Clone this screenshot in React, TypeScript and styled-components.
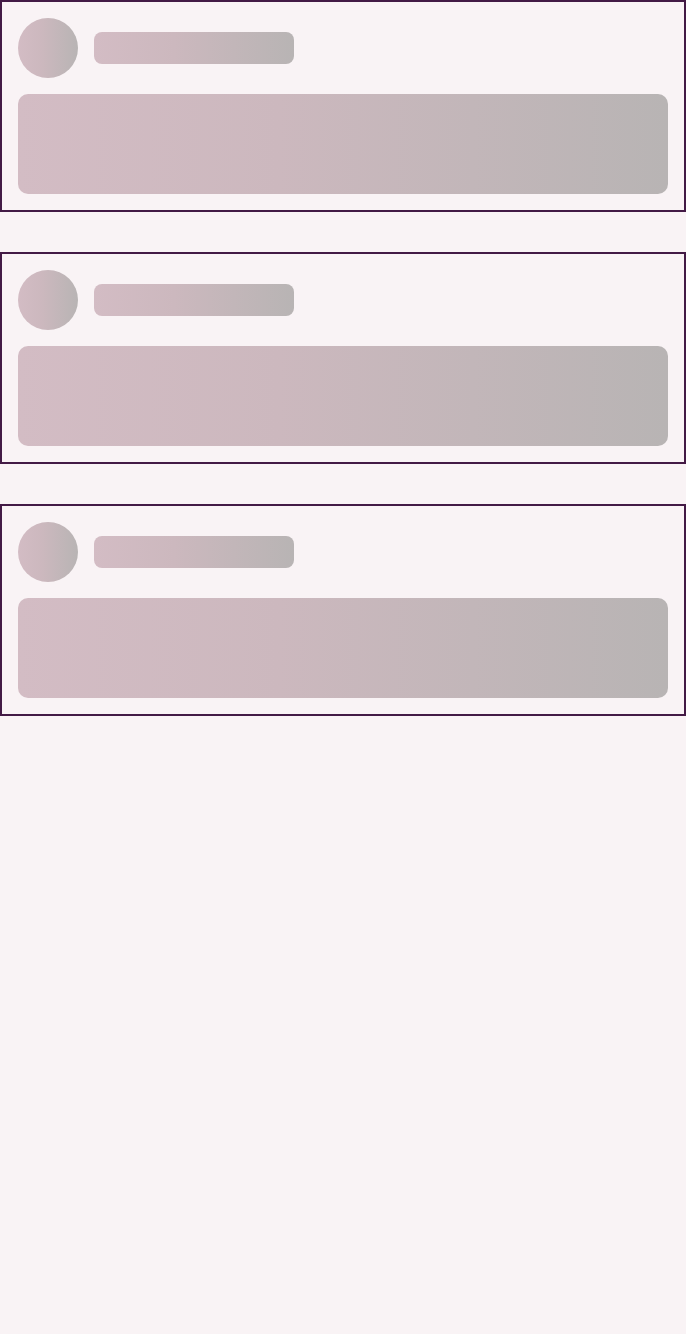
import React from "react";
import styled, { createGlobalStyle } from "styled-components";

const Global = createGlobalStyle`
  html, body { margin: 0; padding: 0; background: #f9f3f5; font-family: "Roboto", sans-serif; }
  * { box-sizing: border-box; }
`;

const List = styled.div`
  display: flex;
  flex-direction: column;
  gap: 40px;
  min-height: 1334px;
  background: #f9f3f5;
`;

const Card = styled.div`
  border: 2px solid #431a45;
  padding: 16px;
  display: flex;
  flex-direction: column;
  gap: 16px;
`;

const Header = styled.div`
  display: flex;
  align-items: center;
  gap: 16px;
`;

const shimmer = `linear-gradient(90deg, #d3bcc4 0%, #ccb8be 40%, #b8b4b4 100%)`;

const Avatar = styled.div`
  width: 60px;
  height: 60px;
  border-radius: 50%;
  background: ${shimmer};
`;

const Title = styled.div`
  width: 200px;
  height: 32px;
  border-radius: 8px;
  background: ${shimmer};
`;

const Body = styled.div`
  height: 100px;
  border-radius: 10px;
  background: ${shimmer};
`;

export default function App() {
  return (
    <>
      <Global />
      <List>
        {[0, 1, 2].map((i) => (
          <Card key={i}>
            <Header>
              <Avatar />
              <Title />
            </Header>
            <Body />
          </Card>
        ))}
      </List>
    </>
  );
}
